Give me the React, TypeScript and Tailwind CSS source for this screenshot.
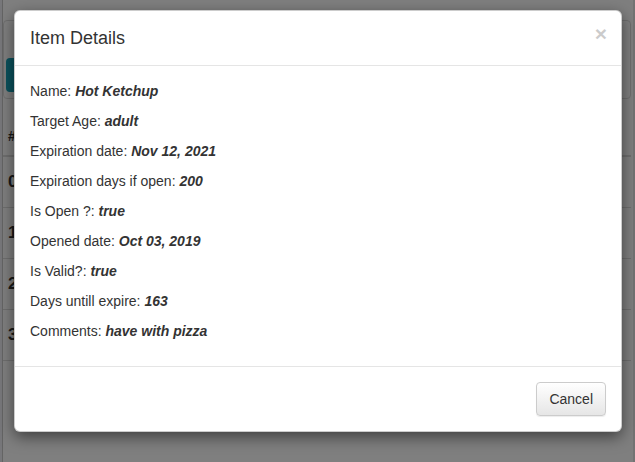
import React from "react";

const rows: [string, string][] = [
  ["Name:", "Hot Ketchup"],
  ["Target Age:", "adult"],
  ["Expiration date:", "Nov 12, 2021"],
  ["Expiration days if open:", "200"],
  ["Is Open ?:", "true"],
  ["Opened date:", "Oct 03, 2019"],
  ["Is Valid?:", "true"],
  ["Days untill expire:", "163"],
  ["Comments:", "have with pizza"],
];

export default function App() {
  return (
    <div
      className="relative h-[462px] w-[635px] overflow-hidden bg-white text-[14px] leading-[20px] text-[#333]"
      style={{ fontFamily: '"Liberation Sans", Arial, sans-serif' }}
    >
      {/* background page */}
      <div className="flex h-full">
        <div className="w-[3px] bg-[#eeeef4] border-r border-[#c8c8c8]" />
        <div className="flex-1 pt-[20px] pr-[2px]">
          <div className="h-[79px] rounded-[4px] border border-[#dddddd] pl-[2px] pt-[37px]">
            <div className="h-[34px] w-[120px] rounded-[4px] bg-[#17a2b8]" />
          </div>
          <div className="mt-[18px]">
            <div className="flex h-[40px] items-center border-b-2 border-[#dddddd] pl-[5px] font-bold">#</div>
            {["0", "1", "2", "3"].map((n) => (
              <div key={n} className="flex h-[51px] items-center border-b border-[#dddddd] pl-[5px] text-[17px] font-bold">
                {n}
              </div>
            ))}
          </div>
        </div>
        <div className="w-[2px] bg-[#e6e6e6]" />
      </div>

      {/* backdrop */}
      <div className="absolute inset-0 bg-black/50" />

      {/* modal */}
      <div className="absolute left-[14px] top-[10px] w-[608px] rounded-[6px] border border-black/20 bg-white shadow-[0_5px_15px_rgba(0,0,0,0.5)]">
        <div className="relative border-b border-[#e5e5e5] p-[15px]">
          <h4 className="text-[18px] font-medium leading-[24px] text-[#333]">Item Details</h4>
          <span className="absolute right-[14px] top-[12px] text-[21px] font-bold leading-[21px] text-black opacity-20">
            ×
          </span>
        </div>
        <div className="p-[15px]">
          {rows.map(([k, v]) => (
            <p key={k} className="mb-[10px] leading-[20px]">
              {k} <b className="italic">{v}</b>
            </p>
          ))}
        </div>
        <div className="flex justify-end border-t border-[#e5e5e5] p-[15px]">
          <button className="h-[34px] rounded-[4px] border border-[#cccccc] bg-gradient-to-b from-white to-[#e6e6e6] px-[12px] text-[14px] text-[#333] shadow-[0_1px_1px_rgba(0,0,0,0.075)]">
            Cancel
          </button>
        </div>
      </div>
    </div>
  );
}
